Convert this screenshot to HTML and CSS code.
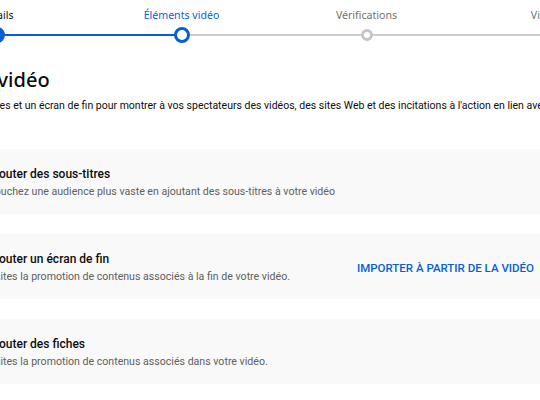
FILE: index.html
```html
<!DOCTYPE html>
<html lang="fr">
<head>
<meta charset="utf-8">
<link rel="stylesheet" href="styles.css">
</head>
<body>
<div class="page">
  <div class="stepper">
    <div class="step done"><span class="label">Détails</span><span class="track"><span class="dot"></span></span></div>
    <div class="step active"><span class="label">Éléments vidéo</span><span class="track"><span class="dot"></span></span></div>
    <div class="step todo"><span class="label">Vérifications</span><span class="track"><span class="dot"></span></span></div>
    <div class="step todo last"><span class="label">Visibilité</span><span class="track"><span class="dot"></span></span></div>
  </div>
  <h1 class="title">Éléments vidéo</h1>
  <p class="intro">Ajoutez des fiches et un écran de fin pour montrer à vos spectateurs des vidéos, des sites Web et des incitations à l'action en lien avec votre contenu.</p>
  <div class="cards">
    <div class="card">
      <div class="text">
        <div class="card-title">Ajouter des sous-titres</div>
        <div class="card-desc">Touchez une audience plus vaste en ajoutant des sous-titres à votre vidéo</div>
      </div>
    </div>
    <div class="card">
      <div class="text">
        <div class="card-title">Ajouter un écran de fin</div>
        <div class="card-desc">Faites la promotion de contenus associés à la fin de votre vidéo.</div>
      </div>
      <span class="action">Importer à partir de la vidéo</span>
    </div>
    <div class="card">
      <div class="text">
        <div class="card-title">Ajouter des fiches</div>
        <div class="card-desc">Faites la promotion de contenus associés dans votre vidéo.</div>
      </div>
    </div>
  </div>
</div>
</body>
</html>
```
FILE: styles.css
```css
html, body {
  margin: 0;
  padding: 0;
  background: #fff;
  overflow: hidden;
  width: 540px;
  height: 400px;
}
.page {
  margin-left: -96px;
  width: 646px;
  font-family: Roboto, "Noto Sans", sans-serif;
  color: #0d0d0d;
}
.stepper {
  display: grid;
  grid-template-columns: repeat(4, 185px);
  width: 740px;
  padding-top: 7px;
}
.step {
  display: flex;
  flex-direction: column;
  align-items: center;
}
.label {
  font-family: "Noto Sans", sans-serif;
  font-size: 10.6px;
  line-height: 16px;
  color: #717171;
  white-space: nowrap;
}
.step.done .label { color: #0d0d0d; }
.step.active .label { color: #065fd4; }
.track {
  position: relative;
  width: 100%;
  height: 16px;
  margin-top: 4px;
  display: flex;
  justify-content: center;
  align-items: center;
}
.track::before, .track::after {
  content: "";
  position: absolute;
  top: 7px;
  height: 2px;
  width: 50%;
  background: #ccc;
}
.track::before { left: 0; }
.track::after { right: 0; }
.step.done .track::before, .step.done .track::after, .step.active .track::before { background: #065fd4; }
.dot {
  position: relative;
  z-index: 1;
  box-sizing: border-box;
  width: 16px;
  height: 16px;
  border-radius: 50%;
  border: 3px solid #065fd4;
  background: #fff;
}
.step.done .dot { background: #065fd4; }
.step.todo .dot {
  width: 12px;
  height: 12px;
  border-color: #c6c6c6;
}
.title {
  font-family: "Noto Sans", sans-serif;
  font-size: 20px;
  font-weight: 500;
  line-height: 28px;
  margin: 23px 0 0 0;
}
.intro {
  font-size: 10.5px;
  line-height: 16px;
  margin: 4px 0 0 21px;
  white-space: nowrap;
}
.cards {
  display: flex;
  flex-direction: column;
  gap: 20px;
  margin-top: 35px;
}
.card {
  background: #f9f9f9;
  display: flex;
  align-items: center;
  justify-content: space-between;
  padding: 17px 16px 15px 85px;
  border-radius: 4px;
}
.card-title {
  font-size: 12px;
  font-weight: 500;
  line-height: 16px;
  margin-left: -1px;
}
.card-desc {
  font-size: 10.6px;
  line-height: 14px;
  margin-top: 3px;
  color: #606060;
}
.action {
  font-size: 11.5px;
  font-weight: 500;
  text-transform: uppercase;
  color: #065fd4;
  white-space: nowrap;
}
```
